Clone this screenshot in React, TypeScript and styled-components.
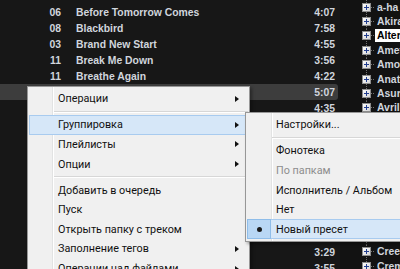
import React from 'react';
import styled, {createGlobalStyle} from 'styled-components';

const GlobalStyle = createGlobalStyle`
  html, body {
    margin: 0;
    padding: 0;
    background: #151515;
    overflow: hidden;
  }
`;

const Screen = styled.div`
  position: relative;
  display: flex;
  width: 400px;
  height: 269px;
  overflow: hidden;
  background: #151515;
  font-family: 'Liberation Sans', Arial, sans-serif;
`;

const TrackPane = styled.div`
  width: 340px;
  flex-shrink: 0;
  display: flex;
  flex-direction: column;
  padding-top: 4px;
  background: #171717;
`;

const TrackRow = styled.div<{ $selected?: boolean }>`
  height: 16px;
  flex-shrink: 0;
  display: grid;
  grid-template-columns: 61px 1fr auto;
  column-gap: 15px;
  align-items: center;
  margin-right: 2px;
  padding-right: 3px;
  border-radius: 0 3px 3px 0;
  background: ${p => (p.$selected ? '#3d3d3d' : 'transparent')};
  color: #d0d5dd;
  font-weight: 700;
  font-size: 10.4px;
  white-space: nowrap;
`;

const TrackNo = styled.span`
  text-align: right;
`;

const TrackTitle = styled.span`
  overflow: hidden;
`;

const TrackTime = styled.span`
  text-align: right;
`;

const TreePane = styled.div`
  flex: 1;
  display: flex;
  flex-direction: column;
  padding-left: 22px;
  background: #121212;
`;

const TreeRow = styled.div`
  height: 14.4px;
  flex-shrink: 0;
  display: flex;
  align-items: center;
  white-space: nowrap;
`;

const Connector = styled.span`
  width: 9px;
  align-self: stretch;
  display: flex;
  align-items: center;
  background: repeating-linear-gradient(to bottom, #707070 0 1px, transparent 1px 2px) center / 1px 100% no-repeat;
`;

const Branch = styled.span`
  width: 4px;
  height: 1px;
  background: repeating-linear-gradient(to right, #707070 0 1px, transparent 1px 2px);
`;

const TreeLabel = styled.span<{ $active?: boolean }>`
  padding: 1px 2px;
  font-weight: 700;
  font-size: 10.4px;
  color: ${p => (p.$active ? '#000' : '#d0d5dd')};
  background: ${p => (p.$active ? '#fff' : 'transparent')};
`;

const Menu = styled.div<{ $gutter: number }>`
  position: absolute;
  display: flex;
  flex-direction: column;
  padding: 2px 1px;
  border: 1px solid #979797;
  box-shadow: 2px 2px 3px rgba(0, 0, 0, 0.35);
  background:
    linear-gradient(to right, transparent ${p => p.$gutter}px, #e2e3e3 ${p => p.$gutter}px,
      #e2e3e3 ${p => p.$gutter + 1}px, #fff ${p => p.$gutter + 1}px, #fff ${p => p.$gutter + 2}px,
      transparent ${p => p.$gutter + 2}px),
    #f0f0f0;
  font-family: Roboto, 'Noto Sans', sans-serif;
  font-size: 10.8px;
  color: #000;
`;

const MainMenu = styled(Menu)`
  top: 86px;
  left: 27px;
  width: 219px;
  height: 200px;
`;

const SubMenu = styled(Menu)`
  top: 112px;
  left: 245px;
  width: 180px;
`;

const Item = styled.div<{ $hot?: boolean; $disabled?: boolean }>`
  height: 19.6px;
  flex-shrink: 0;
  box-sizing: border-box;
  display: grid;
  grid-template-columns: 23px 1fr 12px;
  column-gap: 5px;
  align-items: center;
  border: 1px solid ${p => (p.$hot ? '#a8cbef' : 'transparent')};
  background: ${p => (p.$hot ? '#d6e7f8' : 'transparent')};
  color: ${p => (p.$disabled ? '#8d8d8d' : '#111')};
  white-space: nowrap;
`;

const Gutter = styled.span<{ $checked?: boolean }>`
  align-self: stretch;
  margin: -1px 0 -1px -1px;
  display: flex;
  align-items: center;
  justify-content: center;
  border: 1px solid ${p => (p.$checked ? '#8fbde9' : 'transparent')};
  background: ${p => (p.$checked ? '#b9d7f4' : 'transparent')};
`;

const Bullet = styled.span`
  width: 5px;
  height: 5px;
  border-radius: 50%;
  background: #1a1a1a;
`;

const Arrow = styled.span`
  width: 0;
  height: 0;
  border-top: 3.5px solid transparent;
  border-bottom: 3.5px solid transparent;
  border-left: 4px solid #111;
`;

const Separator = styled.div`
  height: 6.5px;
  flex-shrink: 0;
  margin-left: 25px;
  background: linear-gradient(#d7d7d7, #d7d7d7) 0 2.5px / 100% 1px no-repeat,
    linear-gradient(#fff, #fff) 0 3.5px / 100% 1px no-repeat;
`;

const PlusBox: React.FC = () => (
  <svg width="9" height="9" viewBox="0 0 9 9">
    <defs>
      <linearGradient id="pb" x1="0" y1="0" x2="1" y2="1">
        <stop offset="0" stopColor="#ffffff"/>
        <stop offset="1" stopColor="#d2d2d2"/>
      </linearGradient>
    </defs>
    <rect x="0.5" y="0.5" width="8" height="8" fill="url(#pb)" stroke="#8e8e8e"/>
    <path d="M2 4.5h5M4.5 2v5" stroke="#233e8e" strokeWidth="1"/>
  </svg>
);

type Track = { no: string; title: string; time: string; selected?: boolean };
const tracks: Array<Track> = [
  {no: '06', title: 'Before Tomorrow Comes', time: '4:07'},
  {no: '08', title: 'Blackbird', time: '7:58'},
  {no: '03', title: 'Brand New Start', time: '4:55'},
  {no: '11', title: 'Break Me Down', time: '3:56'},
  {no: '11', title: 'Breathe Again', time: '4:22'},
  {no: '04', title: 'Broken Wings', time: '5:07', selected: true},
  {no: '02', title: 'Buried Alive', time: '4:35'},
  {no: '07', title: 'Burn It Down', time: '3:48'},
  {no: '09', title: 'By The Way', time: '3:37'},
  {no: '01', title: 'Call Me', time: '4:12'},
  {no: '05', title: 'Castles', time: '4:01'},
  {no: '10', title: 'Chasing Cars', time: '4:27'},
  {no: '03', title: 'Clocks', time: '5:07'},
  {no: '12', title: 'Cold', time: '4:18'},
  {no: '06', title: 'Come Undone', time: '4:29'},
  {no: '02', title: 'Cradle', time: '3:29'},
  {no: '04', title: 'Crawling', time: '3:55'},
];

const artists: Array<string> = [
  'a-ha', 'Akira Yamaoka', 'Alter Bridge', 'Amethystium', 'Amorphis', 'Anathema',
  'Asura', 'Avril Lavigne', 'Bjork', 'Blackmore\'s Night', 'Blind Guardian', 'Bon Jovi',
  'Brainstorm', 'Cher', 'Coldplay', 'Cranberries', 'Creed', 'Creedence', 'Crematory',
];

type MenuEntry = { label?: string; arrow?: boolean; hot?: boolean; sep?: boolean };
const mainItems: Array<MenuEntry> = [
  {label: 'Операции', arrow: true},
  {sep: true},
  {label: 'Группировка', arrow: true, hot: true},
  {label: 'Плейлисты', arrow: true},
  {label: 'Опции', arrow: true},
  {sep: true},
  {label: 'Добавить в очередь'},
  {label: 'Пуск'},
  {label: 'Открыть папку с треком'},
  {label: 'Заполнение тегов', arrow: true},
  {label: 'Операции над файлами', arrow: true},
];

type SubEntry = { label?: string; disabled?: boolean; checked?: boolean; sep?: boolean };
const groupItems: Array<SubEntry> = [
  {label: 'Настройки...'},
  {sep: true},
  {label: 'Фонотека'},
  {label: 'По папкам', disabled: true},
  {label: 'Исполнитель / Альбом'},
  {label: 'Нет'},
  {label: 'Новый пресет', checked: true},
];

const App: React.FC = () => {
  return (
    <Screen>
      <GlobalStyle/>
      <TrackPane>
        {tracks.map((t, i) =>
          <TrackRow key={i} $selected={t.selected}>
            <TrackNo>{t.no}</TrackNo>
            <TrackTitle>{t.title}</TrackTitle>
            <TrackTime>{t.time}</TrackTime>
          </TrackRow>)}
      </TrackPane>

      <TreePane>
        {artists.map((a, i) =>
          <TreeRow key={a}>
            <Connector><PlusBox/></Connector>
            <Branch/>
            <TreeLabel $active={i === 2}>{a}</TreeLabel>
          </TreeRow>)}
      </TreePane>

      <MainMenu $gutter={24}>
        {mainItems.map((m, i) => m.sep
          ? <Separator key={i}/>
          : <Item key={i} $hot={m.hot}>
              <Gutter/>
              <span>{m.label}</span>
              {m.arrow ? <Arrow/> : <span/>}
            </Item>)}
      </MainMenu>

      <SubMenu $gutter={25}>
        {groupItems.map((m, i) => m.sep
          ? <Separator key={i}/>
          : <Item key={i} $hot={m.checked} $disabled={m.disabled}>
              <Gutter $checked={m.checked}>{m.checked && <Bullet/>}</Gutter>
              <span>{m.label}</span>
              <span/>
            </Item>)}
      </SubMenu>
    </Screen>
  );
};

export default App;
